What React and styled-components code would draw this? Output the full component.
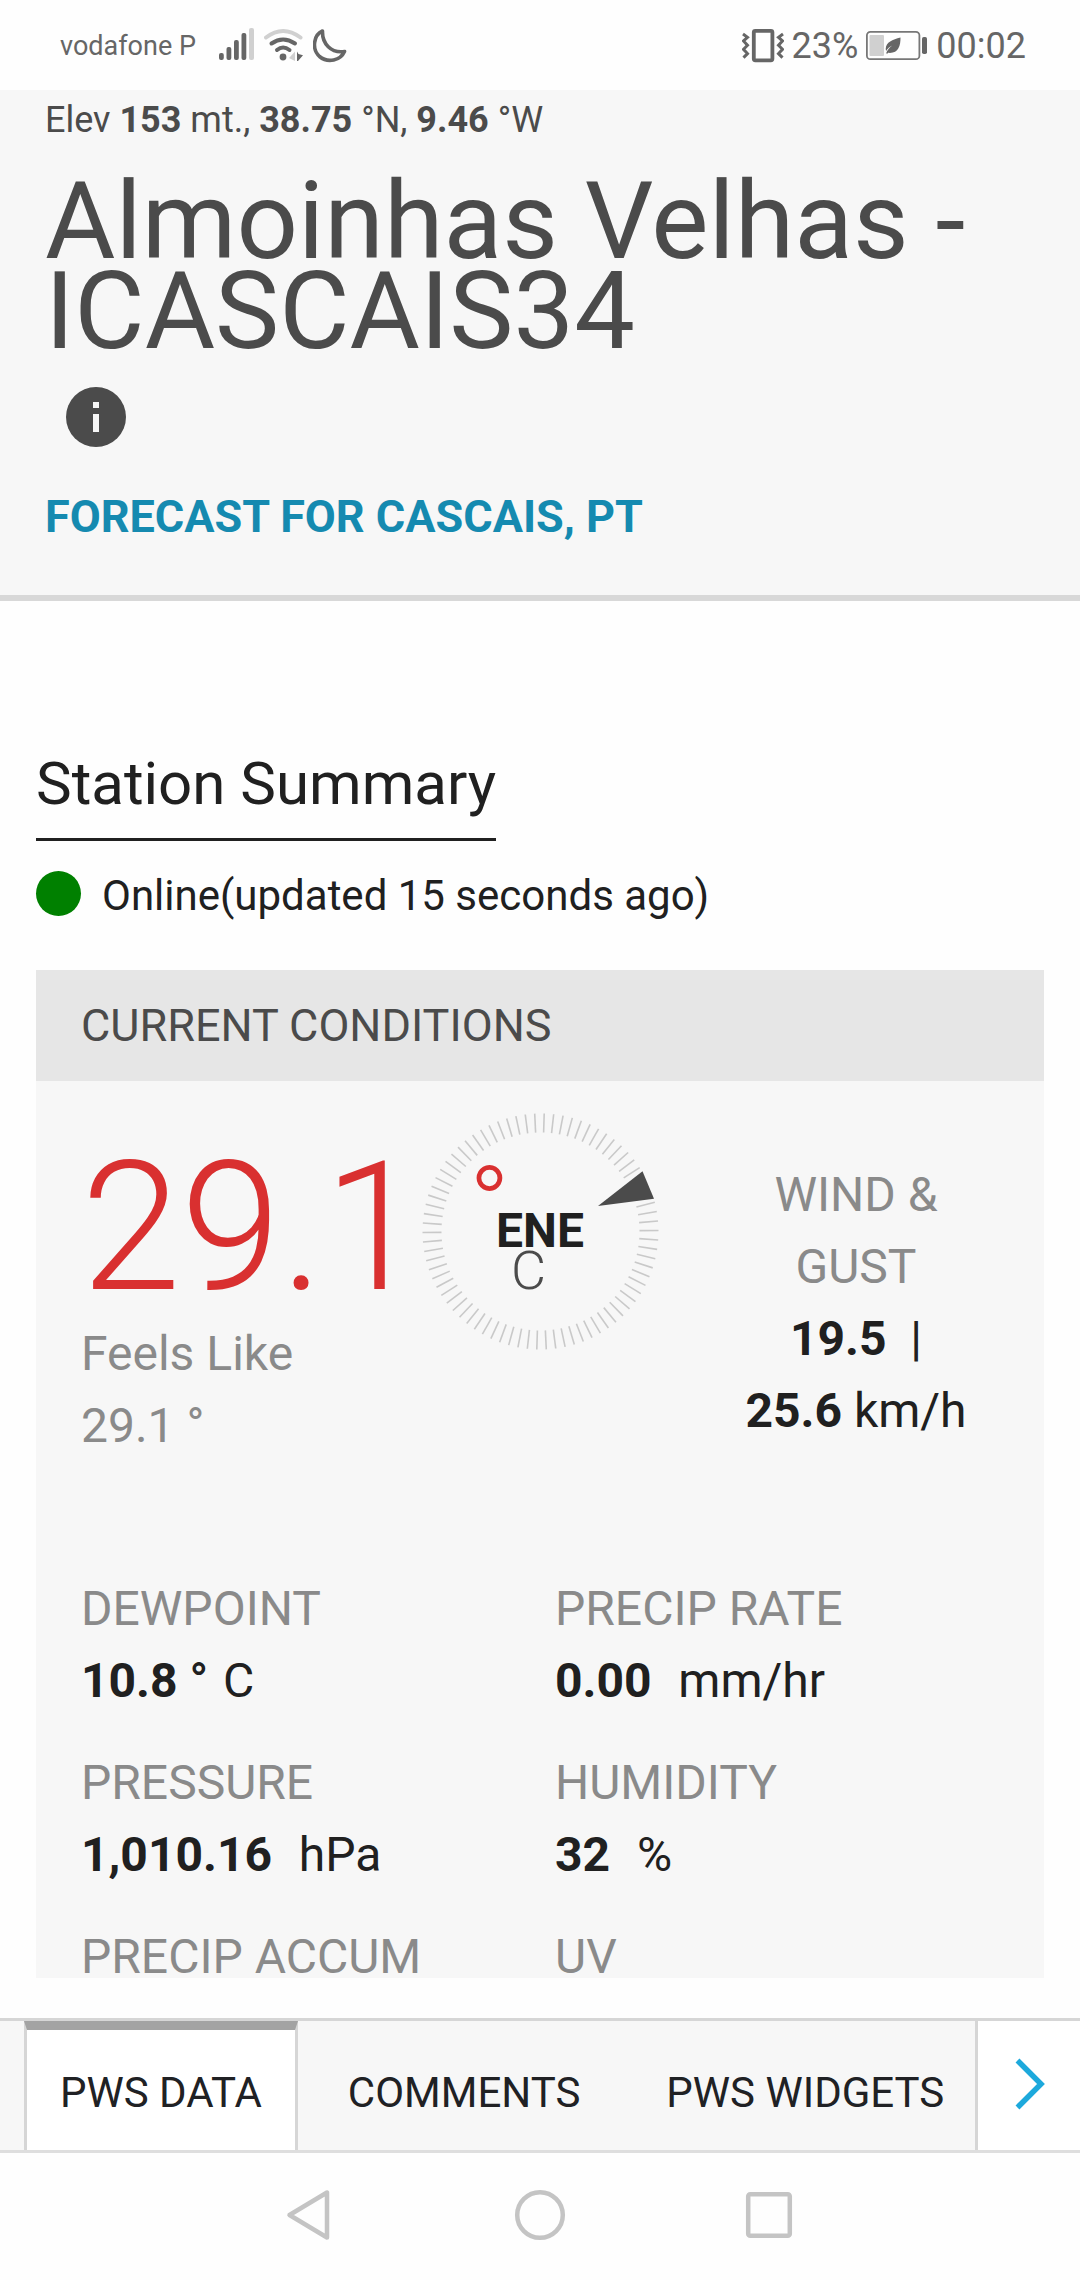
import styled, { createGlobalStyle } from "styled-components";

const GlobalStyle = createGlobalStyle`
  * {
    box-sizing: border-box;
  }
  body {
    margin: 0;
    background: #fefefe;
    color: #202020;
    font-family: Roboto, "Noto Sans", sans-serif;
  }
  button {
    border: 0;
    padding: 0;
    background: none;
    color: inherit;
    font: inherit;
    cursor: pointer;
  }
  svg {
    display: block;
  }
`;

const Page = styled.div`
  display: flex;
  flex-direction: column;
  height: 100vh;
`;

const StatusBar = styled.div`
  display: flex;
  flex: none;
  align-items: center;
  justify-content: space-between;
  height: 90px;
  padding: 2px 54px 0 60px;
  color: #666;
`;

const StatusGroup = styled.div`
  display: flex;
  align-items: center;
  gap: ${({ $gap }) => $gap}px;
`;

const Carrier = styled.span`
  margin-right: 14px;
  font-size: 27px;
`;

const StatusText = styled.span`
  font-size: 36px;
`;

const Scroller = styled.main`
  display: flex;
  flex: 1;
  flex-direction: column;
  min-height: 0;
  margin-bottom: 40px;
  overflow: hidden;
`;

const StationHeader = styled.header`
  flex: none;
  padding: 0 45px 51px;
  border-bottom: 6px solid #d8d8d8;
  background: #f7f7f7;
  color: #4b4b4b;
`;

const Position = styled.p`
  margin: 0;
  font-size: 36px;
  line-height: 60px;
`;

const StationName = styled.h1`
  margin: 26px 0 31px;
  font-size: 108px;
  font-weight: 400;
  line-height: 90px;
`;

const InfoButton = styled.button`
  display: block;
  margin-left: 21px;
`;

const ForecastLink = styled.a`
  display: block;
  margin-top: 43px;
  color: #158ab0;
  font-size: 45px;
  font-weight: 700;
  line-height: 54px;
  text-decoration: none;
  text-transform: uppercase;
`;

const Summary = styled.section`
  display: flex;
  flex: 1;
  flex-direction: column;
  align-items: flex-start;
  min-height: 0;
  padding: 147px 36px 0;
`;

const SummaryTitle = styled.h2`
  margin: 0;
  padding-bottom: 18px;
  border-bottom: 3px solid #202020;
  font-size: 60px;
  font-weight: 400;
  line-height: 72px;
`;

const Online = styled.div`
  display: flex;
  gap: 21px;
  margin: 30px 0 49px;
  font-size: 42px;
  line-height: 50px;
`;

const Dot = styled.span`
  width: 45px;
  height: 45px;
  border-radius: 50%;
  background: #008000;
`;

const Panel = styled.div`
  flex: 1;
  align-self: stretch;
  min-height: 0;
  overflow: hidden;
  background: #f7f7f7;
  font-size: 48px;
  line-height: 72px;
`;

const PanelTitle = styled.h3`
  margin: 0;
  padding: 30px 45px;
  background: #e6e6e6;
  color: #4b4b4b;
  font-size: 45px;
  font-weight: 400;
  line-height: 51px;
  text-transform: uppercase;
`;

const Current = styled.div`
  display: grid;
  grid-template-columns: repeat(3, minmax(0, 1fr));
  align-items: start;
`;

const Temperature = styled.div`
  padding: 57px 0 0 45px;
  white-space: nowrap;
`;

const Degrees = styled.div`
  color: #d93030;
  font-size: 180px;
  font-weight: 300;
  line-height: 180px;
`;

const Muted = styled.div`
  color: #8a8a8a;
`;

const Dial = styled.div`
  position: relative;
  display: grid;
  place-items: center;
  width: 240px;
  height: 240px;
  margin: 30px auto 0;
  svg {
    grid-area: 1 / 1;
  }
`;

const Direction = styled.strong`
  grid-area: 1 / 1;
  line-height: 48px;
`;

/* the unit of the big temperature runs over the dial */
const DegreeSign = styled.span`
  position: absolute;
  top: 41px;
  left: 49px;
  color: #d93030;
  font-size: 108px;
  font-weight: 300;
  line-height: 108px;
`;

const TempUnit = styled.span`
  position: absolute;
  top: 133px;
  left: 91px;
  color: #4b4b4b;
  font-size: 54px;
  font-weight: 300;
  line-height: 54px;
`;

const Wind = styled.div`
  padding: 78px 50px 0 10px;
  text-align: center;
`;

const Gust = styled.span`
  white-space: nowrap;
`;

const Readings = styled.dl`
  display: grid;
  grid-template-columns: repeat(2, 1fr);
  row-gap: 30px;
  margin: 111px 0 0;
  padding: 0 15px 0 45px;
`;

const Label = styled.dt`
  color: #8a8a8a;
  text-transform: uppercase;
`;

const Value = styled.dd`
  display: flex;
  gap: 3px;
  margin: 0;
  white-space: pre;
`;

const TabBar = styled.nav`
  display: flex;
  flex: none;
  height: 135px;
  border-top: 3px solid #d6d6d6;
  border-bottom: 3px solid #dedede;
  background: #f7f7f7;
`;

const Tabs = styled.div`
  display: flex;
  flex: 1;
  gap: 14px;
  min-width: 0;
  padding-left: 24px;
  overflow: hidden;
`;

const Tab = styled.button`
  flex: none;
  padding: 4px 33px 0;
  border: 3px solid ${({ $active }) => ($active ? "#d6d6d6" : "transparent")};
  border-top: 9px solid ${({ $active }) => ($active ? "#a3a3a3" : "transparent")};
  border-bottom: 0;
  background: ${({ $active }) => ($active ? "#fff" : "none")};
  color: #202124;
  font-size: 42px;
  text-transform: uppercase;
`;

const NextButton = styled.button`
  display: flex;
  flex: none;
  align-items: center;
  width: 105px;
  padding: 0 0 3px 37px;
  border-left: 3px solid #d6d6d6;
  background: #fff;
`;

const SystemNav = styled.div`
  display: flex;
  flex: none;
  align-items: flex-start;
  justify-content: center;
  gap: 177px;
  height: 127px;
  padding-top: 36px;
`;

const tabs = ["PWS Data", "Comments", "PWS Widgets"];

const readings = [
  { label: "Dewpoint", value: "10.8 °", unit: " C" },
  { label: "Precip Rate", value: "0.00", unit: "  mm/hr" },
  { label: "Pressure", value: "1,010.16", unit: "  hPa" },
  { label: "Humidity", value: "32", unit: "  %" },
  { label: "Precip Accum" },
  { label: "UV" },
];

const TICKS = 78;
// ticks left out under the pointer
const HIDDEN = [13, 14, 15];

function SignalIcon() {
  const tops = [54, 48, 41, 34];
  return (
    <svg width="36" height="36" viewBox="219 29 36 36" fill="#666">
      {tops.map((y, i) => (
        <rect key={y} x={219 + i * 7.5} y={y} width="4.8" height={61 - y} rx="2" />
      ))}
      <rect x="249" y="29" width="5" height="32" rx="2" fill="#d0d0d0" />
    </svg>
  );
}

function WifiIcon() {
  return (
    <svg width="40" height="36" viewBox="264 28 40 36" fill="none" strokeWidth="4" strokeLinecap="round">
      <path d="M266 37.5Q283 24.500 300.500 37.500" stroke="#d0d0d0" />
      <path d="M271.500 43.500Q283 35.500 295 43.500" stroke="#666" />
      <path d="M277 50Q283 45 289.500 50" stroke="#666" />
      <circle cx="283" cy="57" r="3.400" fill="#666" />
      <path d="M289 58l6-6.500v9.500z" fill="#d0d0d0" />
      <path d="M297 51.500l1.500 2.500 4.500 1.200-5 5.800h-1z" fill="#666" />
    </svg>
  );
}

function MoonIcon() {
  return (
    <svg width="34" height="36" viewBox="313 28 34 36" fill="none" stroke="#666" strokeWidth="3.600" strokeLinejoin="round">
      <path d="M322.500 31C313.500 35 311.500 49 319.500 56.500C328 63.500 340.500 60.500 344.500 51.500C331 53.500 322 43.500 322.500 31z" />
    </svg>
  );
}

function VibrateIcon() {
  return (
    <svg width="42" height="36" viewBox="742 28 42 36" fill="none" stroke="#666">
      <rect x="753.800" y="30.800" width="18.600" height="29.500" rx="1.500" strokeWidth="3.800" />
      <path strokeWidth="3" d="M743 34l4.500 3.300-4 3.700 4 4.300-4 4 4 4.300-4 4M783 34l-4.500 3.300 4 3.700-4 4.300 4 4-4 4.300 4 4" />
    </svg>
  );
}

function BatteryIcon() {
  return (
    <svg width="62" height="32" viewBox="866 30 62 32" fill="#666">
      <rect x="866.900" y="31.800" width="52.500" height="27.400" rx="3.500" fill="none" stroke="#777" strokeWidth="1.800" />
      <rect x="869.500" y="35" width="14.500" height="21" rx="1" fill="#d0d0d0" />
      <rect x="922" y="37" width="5" height="17" rx="1.800" />
      <path d="M900.500 37.500c-8 2-14.500 4.500-14.800 11.500l.4 2c1.500-2.500 3.500-4.200 6.200-5.500-2.800 2-5 4.500-6.200 7.700l1.200.6.8-1c10 1 12.500-6.500 12.400-15.300z" />
    </svg>
  );
}

function InfoIcon() {
  return (
    <svg width="60" height="60" viewBox="0 0 60 60">
      <circle cx="30" cy="30" r="30" fill="#4b4b4b" />
      <path d="M27 15h6v6h-6zM27 27h6v18h-6z" fill="#f7f7f7" />
    </svg>
  );
}

function Compass() {
  return (
    <svg width="240" height="240" viewBox="0 0 240 240">
      {Array.from({ length: TICKS }, (_, i) =>
        HIDDEN.includes(i) ? null : (
          <line
            key={i}
            x1="120.500"
            x2="120.500"
            y1="2.500"
            y2="21.500"
            stroke="#c9c9c9"
            strokeWidth="1.600"
            transform={`rotate(${1.8 + (i * 360) / TICKS} 120.5 120.5)`}
          />
        )
      )}
      <path d="M222.500 60.300L234 87.700 178 95z" fill="#4b4b4b" />
    </svg>
  );
}

export default function App() {
  return (
    <Page>
      <GlobalStyle />
      <StatusBar>
        <StatusGroup $gap={9}>
          <Carrier>vodafone P</Carrier>
          <SignalIcon />
          <WifiIcon />
          <MoonIcon />
        </StatusGroup>
        <StatusGroup $gap={8}>
          <VibrateIcon />
          <StatusText>23%</StatusText>
          <BatteryIcon />
          <StatusText>00:02</StatusText>
        </StatusGroup>
      </StatusBar>

      <Scroller>
        <StationHeader>
          <Position>
            Elev <strong>153</strong> mt., <strong>38.75</strong> °N, <strong>9.46</strong> °W
          </Position>
          <StationName>Almoinhas Velhas - ICASCAIS34</StationName>
          <InfoButton aria-label="Station info">
            <InfoIcon />
          </InfoButton>
          <ForecastLink href="#forecast">Forecast for Cascais, PT</ForecastLink>
        </StationHeader>

        <Summary>
          <SummaryTitle>Station Summary</SummaryTitle>
          <Online>
            <Dot />
            <span>Online(updated 15 seconds ago)</span>
          </Online>
          <Panel>
            <PanelTitle>Current Conditions</PanelTitle>
            <Current>
              <Temperature>
                <Degrees>29.1</Degrees>
                <Muted>Feels Like</Muted>
                <Muted>29.1 °</Muted>
              </Temperature>
              <Dial>
                <Compass />
                <Direction>ENE</Direction>
                <DegreeSign>°</DegreeSign>
                <TempUnit>C</TempUnit>
              </Dial>
              <Wind>
                <Muted>WIND &amp; GUST</Muted>
                <strong>19.5</strong>&nbsp; |{" "}
                <Gust>
                  <strong>25.6</strong> km/h
                </Gust>
              </Wind>
            </Current>
            <Readings>
              {readings.map(({ label, value, unit }) => (
                <div key={label}>
                  <Label>{label}</Label>
                  {value && (
                    <Value>
                      <strong>{value}</strong>
                      <span>{unit}</span>
                    </Value>
                  )}
                </div>
              ))}
            </Readings>
          </Panel>
        </Summary>
      </Scroller>

      <TabBar>
        <Tabs>
          {tabs.map((tab, i) => (
            <Tab key={tab} $active={i === 0}>
              {tab}
            </Tab>
          ))}
        </Tabs>
        <NextButton aria-label="More tabs">
          <svg width="32" height="52" viewBox="0 0 32 52" fill="none" stroke="#1da9dc" strokeWidth="5.500">
            <path d="M2.500 2.500L26 26 2.500 49.500" />
          </svg>
        </NextButton>
      </TabBar>

      <SystemNav>
        <button aria-label="Back">
          <svg width="52" height="52" viewBox="0 0 52 52" fill="none" stroke="#c4c4c4" strokeWidth="4.500" strokeLinejoin="round">
            <path d="M4.500 26L42 3.500v45z" />
          </svg>
        </button>
        <button aria-label="Home">
          <svg width="52" height="52" viewBox="0 0 52 52" fill="none" stroke="#c4c4c4" strokeWidth="4.500">
            <circle cx="26" cy="26" r="22.800" />
          </svg>
        </button>
        <button aria-label="Recent apps">
          <svg width="52" height="52" viewBox="0 0 52 52" fill="none" stroke="#c4c4c4" strokeWidth="4.500">
            <rect x="5.200" y="5.200" width="41.600" height="41.600" rx="2" />
          </svg>
        </button>
      </SystemNav>
    </Page>
  );
}
